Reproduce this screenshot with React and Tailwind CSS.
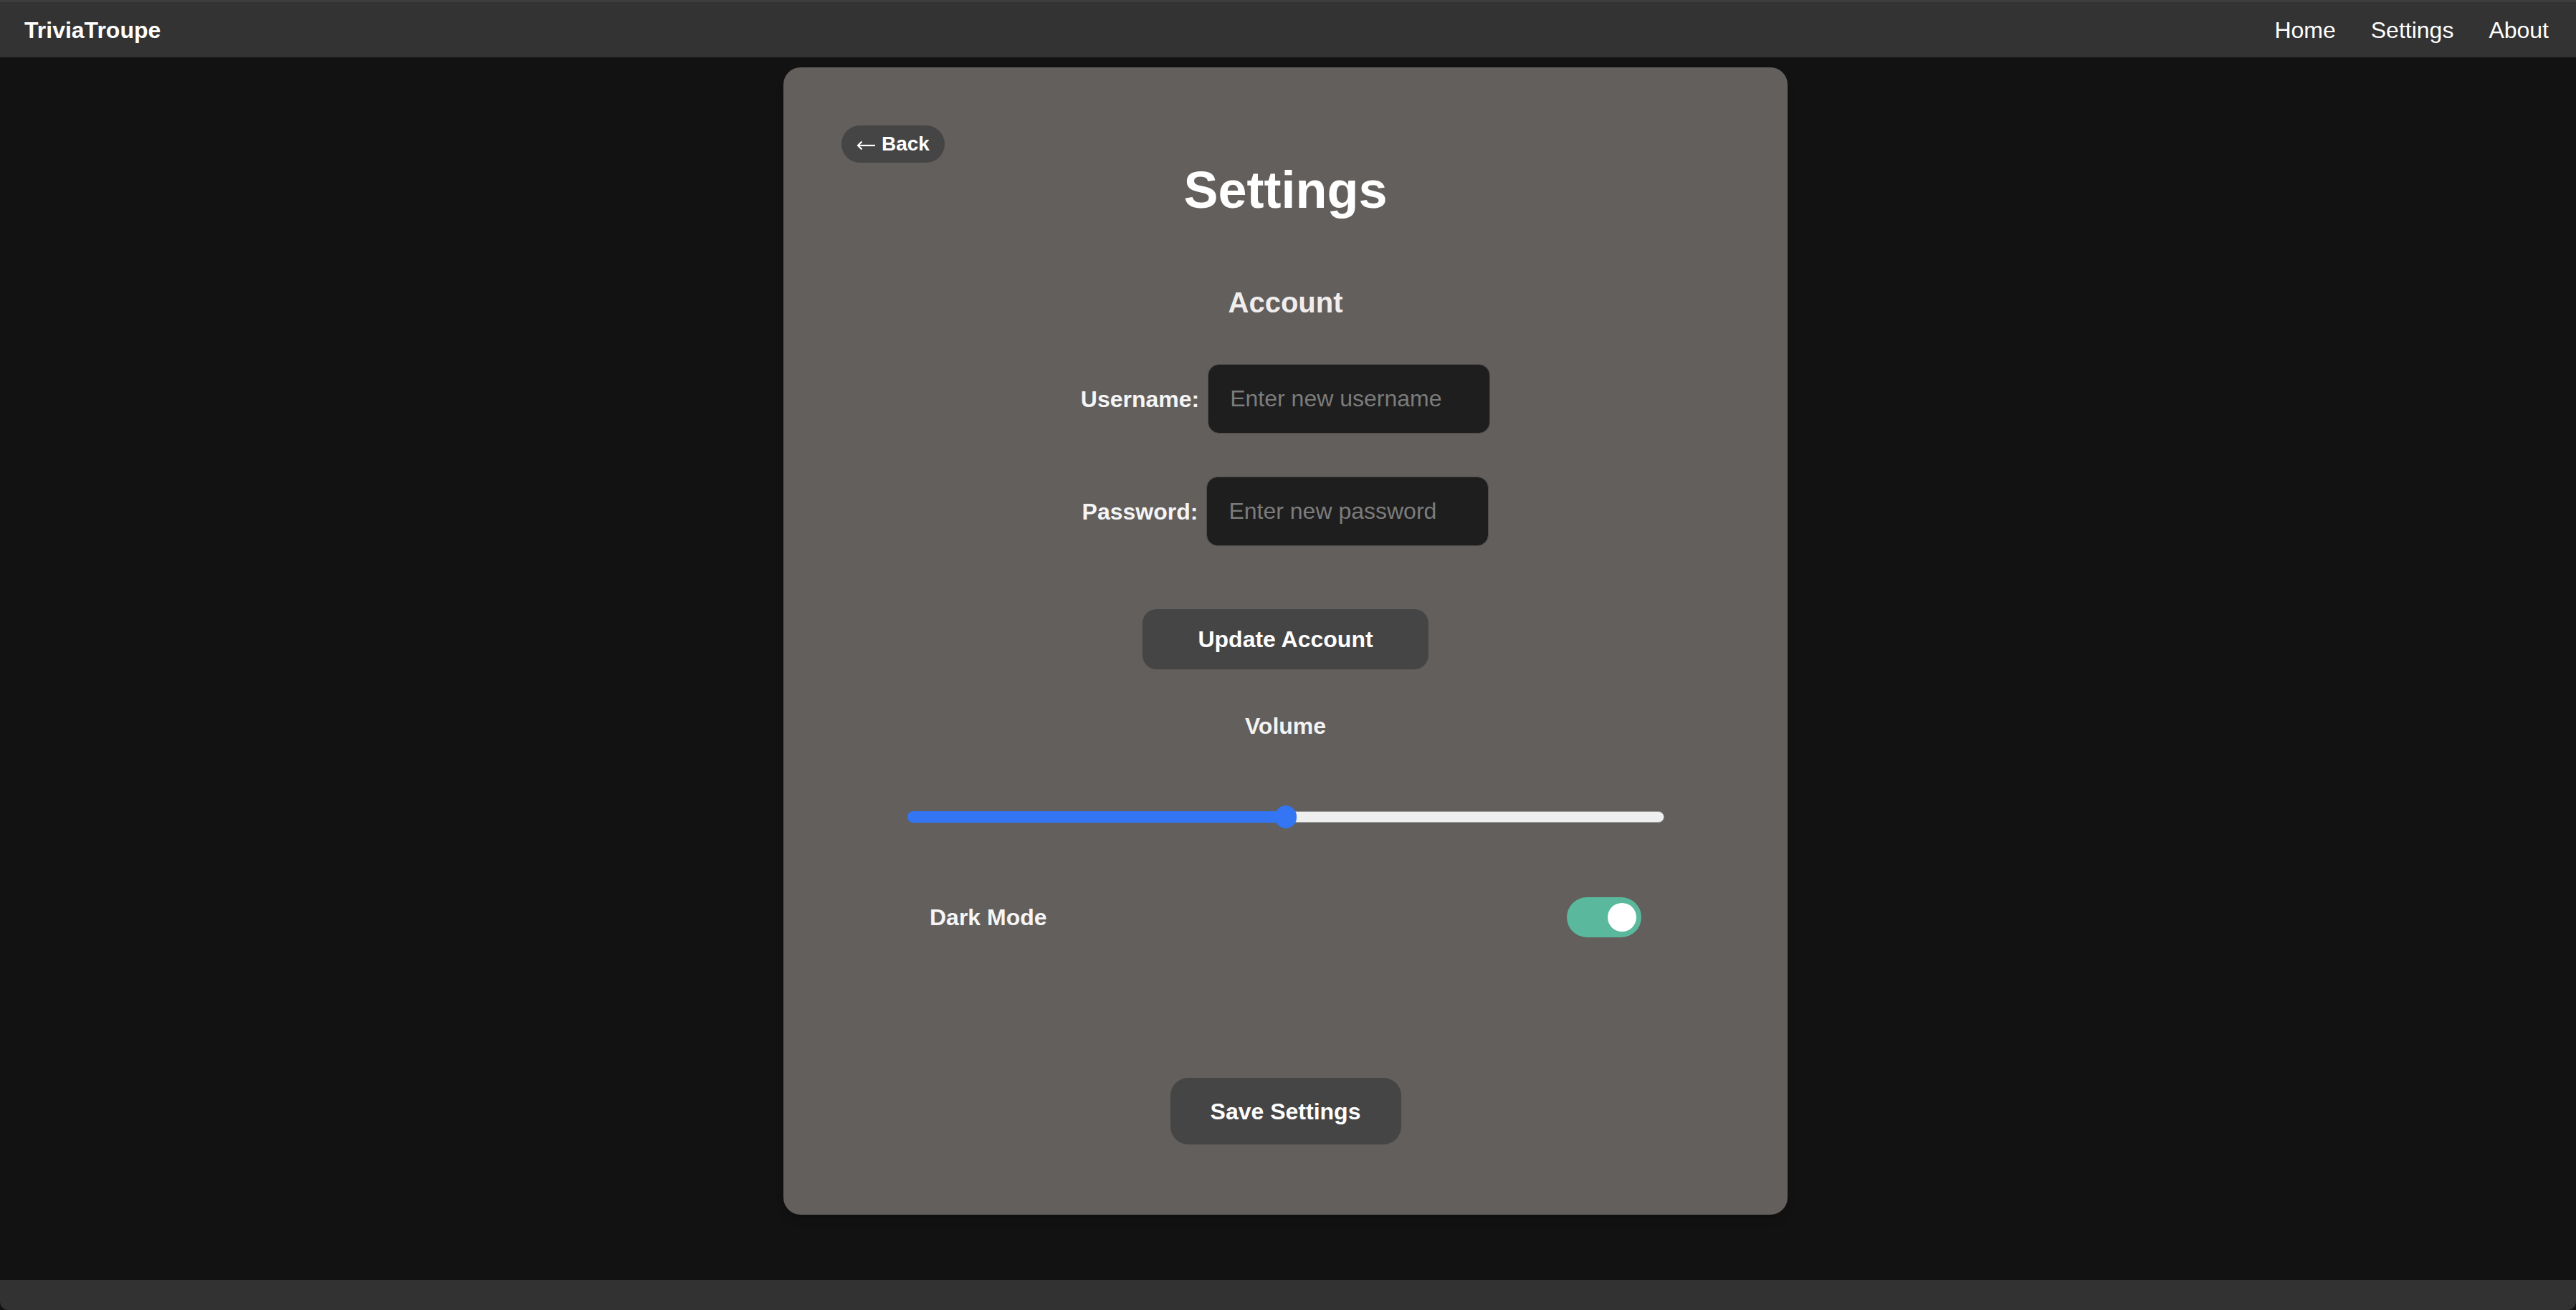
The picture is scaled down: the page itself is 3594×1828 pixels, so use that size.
import { useState } from "react";

function Navbar() {
  return (
    <nav className="h-[80px] border-t-[3px] border-[#3d3d3d] bg-[#333333] pl-[34px] pr-[38px] flex justify-between items-center text-white">
      <h1 className="text-[32px] font-bold">TriviaTroupe</h1>
      <div className="flex items-center gap-[49px] text-[32px]">
        <a href="#">Home</a>
        <a href="#">Settings</a>
        <a href="#">About</a>
      </div>
    </nav>
  );
}

function VolumeSlider({ value }) {
  return (
    <div className="relative mx-auto mt-[92px] h-[32px] w-[1056px] flex items-center">
      <div className="flex h-[16px] w-full">
        <div className="h-full rounded-l-full bg-[#3375f2]" style={{ width: `${value}%` }} />
        <div className="h-full flex-1 rounded-r-full border border-[#9c9c9c] bg-[#efefef]" />
      </div>
      <div
        className="absolute top-0 h-[32px] w-[30px] -translate-x-1/2 rounded-full bg-[#3375f2]"
        style={{ left: `${value}%` }}
      />
    </div>
  );
}

function Settings() {
  const [darkMode, setDarkMode] = useState(true);

  return (
    <div className="mx-auto mt-[14px] flex w-[1401px] flex-col rounded-[24px] bg-[#625f5d] px-[81px] pt-[81px] pb-[98px] text-white shadow-lg">
      <button className="flex h-[52px] items-center gap-[8px] self-start rounded-full bg-[#454545] px-[21px] text-[28px] font-bold">
        {/* thin arrow like the system glyph */}
        <svg width="27" height="14" viewBox="0 0 27 14" fill="none" stroke="white" strokeWidth="2.2" className="mt-[3px]">
          <path d="M26 7H2" />
          <path d="M7.5 1.5L2 7l5.5 5.5" />
        </svg>
        <span>Back</span>
      </button>

      <h1 className="text-center text-[72px] font-bold leading-[76px]">Settings</h1>

      <h2 className="mt-[96px] text-center text-[40px] font-bold leading-[46px] text-[#f1eded]">
        Account
      </h2>

      <div className="mt-[63px] flex items-center justify-center gap-[12px]">
        <label className="text-[32px] font-bold text-[#f5f5f5]">Username:</label>
        <input
          type="text"
          placeholder="Enter new username"
          className="h-[97px] w-[394px] rounded-[16px] border border-[#4f4c4b] bg-[#1e1e1e] px-[30px] text-[32px] text-white placeholder:text-[#7c7c7c] outline-none"
        />
      </div>

      <div className="mt-[60px] flex items-center justify-center gap-[12px]">
        <label className="text-[32px] font-bold text-[#f5f5f5]">Password:</label>
        <input
          type="password"
          placeholder="Enter new password"
          className="h-[97px] w-[394px] rounded-[16px] border border-[#4f4c4b] bg-[#1e1e1e] px-[30px] text-[32px] text-white placeholder:text-[#7c7c7c] outline-none"
        />
      </div>

      <button className="mx-auto mt-[88px] h-[84px] w-[399px] rounded-[20px] bg-[#454545] text-[32px] font-bold">
        Update Account
      </button>

      <p className="mt-[61px] text-center text-[32px] font-bold leading-[37px] text-[#f3f3f3]">Volume</p>

      <VolumeSlider value={50} />

      <div className="mx-auto mt-[96px] flex h-[56px] w-[993px] items-center justify-between">
        <span className="text-[32px] font-bold text-[#f5f5f5]">Dark Mode</span>
        <button
          onClick={() => setDarkMode(!darkMode)}
          className={
            darkMode
              ? "flex h-[56px] w-[104px] items-center justify-end rounded-full bg-[#5ab99c] px-[7px]"
              : "flex h-[56px] w-[104px] items-center justify-start rounded-full bg-[#888] px-[7px]"
          }
        >
          <span className="h-[40px] w-[40px] rounded-full bg-white" />
        </button>
      </div>

      <button className="mx-auto mt-[196px] h-[93px] w-[322px] rounded-[25px] bg-[#454545] text-[32px] font-bold">
        Save Settings
      </button>
    </div>
  );
}

export default function App() {
  return (
    <div className="flex min-h-screen flex-col bg-[#121212] font-['Liberation_Sans',Arial,sans-serif]">
      <Navbar />
      <main className="flex-1 pr-[7px]">
        <Settings />
      </main>
      <footer className="h-[42px] rounded-b-[12px] bg-[#323232]" />
    </div>
  );
}
